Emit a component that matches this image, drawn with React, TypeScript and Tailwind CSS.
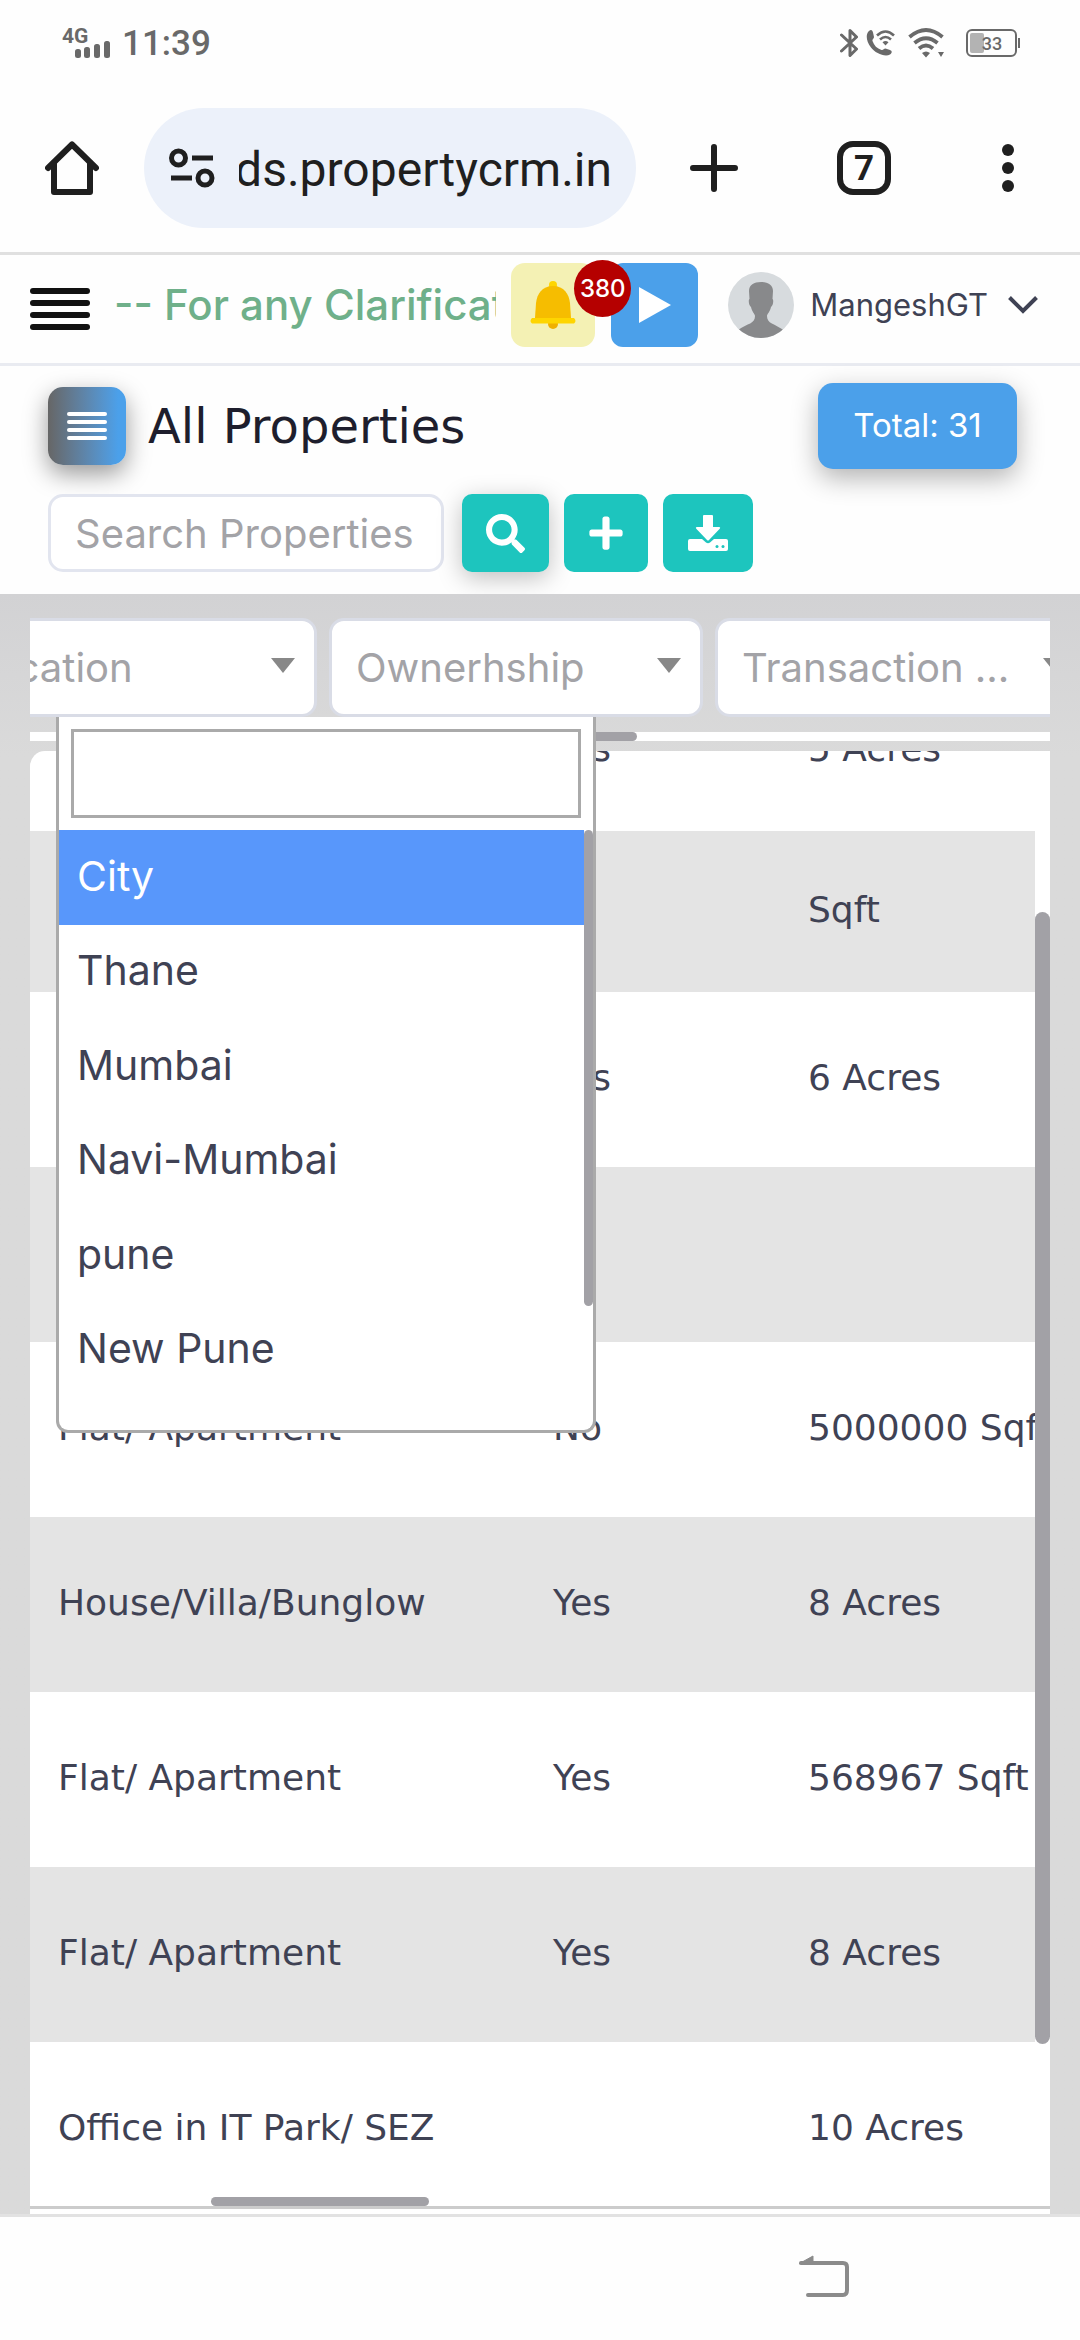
import { useState } from 'react'
import clsx from 'clsx'
import { FaPlus, FaSearch } from 'react-icons/fa'

interface Property {
  id: number; type: string; negotiable: string; area: string
}

const properties: Property[] = [
  { id: 1, type: '', negotiable: 'Yes', area: '5 Acres' },
  { id: 2, type: '', negotiable: '', area: 'Sqft' },
  { id: 3, type: '', negotiable: 'Yes', area: '6 Acres' },
  { id: 4, type: '', negotiable: '', area: '' },
  { id: 5, type: 'Flat/ Apartment', negotiable: 'No', area: '5000000 Sqft' },
  { id: 6, type: 'House/Villa/Bunglow', negotiable: 'Yes', area: '8 Acres' },
  { id: 7, type: 'Flat/ Apartment', negotiable: 'Yes', area: '568967 Sqft' },
  { id: 8, type: 'Flat/ Apartment', negotiable: 'Yes', area: '8 Acres' },
  { id: 9, type: 'Office in IT Park/ SEZ', negotiable: '', area: '10 Acres' },
]

const cities = ['City', 'Thane', 'Mumbai', 'Navi-Mumbai', 'pune', 'New Pune']

const filters = ['Location', 'Ownerhship', 'Transaction ...']

function StatusBar() {
  return (
    <div className="flex h-[84px] items-center justify-between pt-[2px] pr-[60px] pl-[62px] text-[#696969]">
      <div className="flex items-center gap-3">
        <svg className="overflow-visible" width="48" height="32" viewBox="0 0 48 32" fill="currentColor">
          <text x="0" y="16" fontSize="21" fontWeight="700" fontFamily="Roboto, sans-serif">4G</text>
          <rect x="13" y="22" width="6" height="9" rx="2.5" />
          <rect x="22" y="20" width="6" height="11" rx="2.5" />
          <rect x="32" y="17" width="6" height="14" rx="2.5" />
          <rect x="42" y="14" width="6" height="17" rx="2.5" />
        </svg>
        <span className="pt-[2px] text-[35px] leading-[40px] font-medium">11:39</span>
      </div>
      <div className="flex items-center">
        <svg width="18" height="30" viewBox="0 0 18 30" fill="none" stroke="currentColor" strokeWidth="3">
          <path d="M1.500 7 L16.500 21 L10 27.500 V2.500 L16.500 9 L1.500 23" strokeLinejoin="round" strokeLinecap="round" />
        </svg>
        <svg className="ml-2" width="30" height="28" viewBox="0 0 30 28">
          <path d="M3 2 C5 0 6.500 1 7 3.500 L8 8 C8 9.500 6 10 6.500 12 C8 16.500 11 19.500 15.500 21 C17.500 21.500 17.500 19.500 19.500 19.500 L24 21 C26.500 22 26 24 24 25.500 C19 28.500 9 24 5 18.500 C0 12 -.5 5 3 2Z" fill="currentColor" />
          <g fill="none" stroke="currentColor" strokeWidth="2.6">
            <path d="M11 6.500 Q19.500 -1.500 28 6.500" />
            <path d="M14 10.500 Q19.500 5.500 25 10.500" />
          </g>
          <path d="M16.500 13.200 Q19.500 11 22.500 13.200 L19.500 16.500Z" fill="currentColor" />
        </svg>
        <svg className="ml-3" width="38" height="30" viewBox="0 0 38 30">
          <g fill="none" stroke="currentColor" strokeWidth="3.8">
            <path d="M1.500 9 Q18 -5 34.500 9" />
            <path d="M6.500 15 Q18 5.500 29.500 15" />
            <path d="M11 20.500 Q18 14.500 25 20.500" />
          </g>
          <path d="M14 25 Q18 22 22 25 L18 29.500Z M30 24 h6 l-3 5z" fill="currentColor" />
        </svg>
        <svg className="ml-5" width="54" height="28" viewBox="0 0 54 28">
          <rect x="1" y="1" width="49" height="26" rx="5" fill="none" stroke="currentColor" strokeWidth="2" />
          <rect x="4" y="4" width="14" height="20" rx="2" fill="#b3b3b3" />
          <rect x="52" y="9" width="2" height="10" fill="currentColor" />
          <text x="26" y="21" textAnchor="middle" fontSize="18" fontWeight="500" fontFamily="Roboto, sans-serif" fill="currentColor">33</text>
        </svg>
      </div>
    </div>
  )
}

function BrowserBar() {
  return (
    <div className="flex h-[168px] items-center pr-[66px] pl-[45px] text-[#1f1f1f]">
      <button aria-label="Home">
        <svg width="54" height="54" viewBox="0 0 54 54" fill="none" stroke="currentColor" strokeWidth="6" strokeLinecap="round" strokeLinejoin="round">
          <path d="M3 27 L27 3.500 L51 27" />
          <path d="M9 22 V51 H45 V22" />
        </svg>
      </button>
      <div className="ml-[45px] flex h-[120px] flex-1 items-center gap-6 overflow-hidden rounded-full bg-[#ecf1fa] pr-[24px] pl-[25px]">
        <svg className="shrink-0" width="46" height="40" viewBox="0 0 46 40" fill="none" stroke="currentColor" strokeWidth="5">
          <circle cx="9.500" cy="10" r="7" />
          <path d="M23 10 H44 M2 30 H23" />
          <circle cx="36" cy="30" r="7" />
        </svg>
        <div className="flex min-w-0 flex-1 justify-end overflow-hidden pt-1">
          <span className="text-[48px] leading-[64px] whitespace-nowrap">ds.propertycrm.in</span>
        </div>
      </div>
      <button aria-label="New tab" className="ml-[54px]">
        <svg width="48" height="48" viewBox="0 0 48 48" stroke="currentColor" strokeWidth="6" strokeLinecap="round">
          <path d="M24 3 V45 M3 24 H45" />
        </svg>
      </button>
      <button aria-label="Open tabs" className="ml-[99px] flex size-[54px] items-center justify-center rounded-2xl border-6 border-[#1f1f1f] pt-[2px] text-[35px] leading-[40px] font-bold">
        7
      </button>
      <button aria-label="Menu" className="ml-[111px] flex flex-col gap-[6px]">
        <span className="size-3 rounded-full bg-current" />
        <span className="size-3 rounded-full bg-current" />
        <span className="size-3 rounded-full bg-current" />
      </button>
    </div>
  )
}

function BellIcon() {
  return (
    <svg width="48" height="50" viewBox="0 0 48 50">
      <circle cx="24" cy="5" r="4" fill="#fed500" />
      <circle cx="24" cy="44" r="5" fill="#f0b000" />
      <path d="M24 6 C13 6 8 14 7 23 L6 38 H42 L41 23 C40 14 35 6 24 6Z" fill="#f6bd00" />
      <path d="M3 38 H45 Q48 41 45 43.500 H3 Q0 41 3 38Z" fill="#fed500" />
    </svg>
  )
}

function Avatar() {
  return (
    <svg className="shrink-0 rounded-full" width="66" height="66" viewBox="0 0 66 66">
      <rect width="66" height="66" fill="#d7dbde" />
      <path d="M21 19 C21 13 26 10 33 10 C40 10 45 13 45 19 L44.500 27 C46 28 45 34 43 35 C42 40 39 42 39 44 C39 52 46 51 57 59 L50 66 H16 L10 58 C20 51 27 52 27 44 C27 42 24 40 23 35 C21 34 20 28 21.500 27Z" fill="#88898b" />
    </svg>
  )
}

function AppHeader() {
  return (
    <header className="flex items-center border-t-3 border-b-3 border-t-[#e0e0e0] border-b-[#e9ebf1] pt-2 pr-[42px] pb-4 pl-[30px] font-['Inter',sans-serif]">
      <button aria-label="Toggle sidebar" className="flex w-[60px] flex-col gap-[6px] pt-2">
        {[1, 2, 3, 4].map(n => (
          <span key={n} className="h-[6px] w-full rounded-full bg-[#111]" />
        ))}
      </button>
      <p className="ml-6 min-w-0 flex-1 overflow-hidden text-[42px] leading-[56px] font-medium whitespace-nowrap text-[#6fb08a]">
        -- For any Clarification
      </p>
      <button aria-label="Notifications" className="relative ml-[15px] flex size-[84px] items-center justify-center rounded-[14px] bg-[#f4f1b4]">
        <BellIcon />
        <span className="absolute -top-[3px] left-[63px] z-10 flex size-[57px] items-center justify-center rounded-full bg-[#b50000] text-2xl font-medium text-white">
          380
        </span>
      </button>
      <button aria-label="Play" className="ml-4 flex h-[84px] w-[87px] items-center justify-center rounded-xl bg-[#4ba0ea]">
        <svg width="34" height="38" viewBox="0 0 34 38" fill="#fff">
          <path d="M1 1 L33 19 L1 37Z" />
        </svg>
      </button>
      <button className="ml-[30px] flex items-center text-[#3f4254]">
        <Avatar />
        <span className="ml-4 text-[31px]">MangeshGT</span>
        <svg className="ml-5" width="30" height="18" viewBox="0 0 30 18" fill="none" stroke="currentColor" strokeWidth="4">
          <path d="M1.500 1.500 L15 15 L28.500 1.500" />
        </svg>
      </button>
    </header>
  )
}

function PageHead({ total }: { total: number }) {
  return (
    <section className="flex flex-col gap-[25px] px-12 pt-[17px] pb-[22px] font-['Inter',sans-serif]">
      <div className="flex items-center pr-[15px]">
        <button aria-label="List menu" className="flex size-[78px] flex-col items-center justify-center gap-1 rounded-[15px] bg-linear-to-r from-[#666] to-[#4ba0ea] to-90% shadow-[0_9px_24px_rgba(0,0,0,0.4)]">
          {[1, 2, 3, 4].map(n => (
            <span key={n} className="h-1 w-10 rounded-xs bg-white" />
          ))}
        </button>
        <h1 className="ml-[22px] flex-1 font-['DejaVu_Sans',sans-serif] text-5xl text-[#1e1e2d]">All Properties</h1>
        <button className="h-[86px] w-[199px] rounded-[15px] bg-[#4ba0ea] text-[33px] text-white shadow-[0_9px_27px_rgba(0,0,0,0.3)]">
          Total: {total}
        </button>
      </div>
      <div className="flex items-center">
        <input
          type="text"
          aria-label="Search Properties"
          placeholder="Search Properties"
          className="h-[78px] w-[396px] rounded-[15px] border-3 border-[#e2e5ef] bg-white pr-4 pl-6 text-[40px] text-[#3f4254] placeholder:text-[#a3a3a7]"
        />
        <button aria-label="Search" className="ml-[18px] flex h-[78px] w-[87px] items-center justify-center rounded-[10px] bg-[#1dc5be] text-white shadow-[0_6px_24px_rgba(0,0,0,0.25)]">
          <FaSearch size={39} />
        </button>
        <button aria-label="Add property" className="ml-[15px] flex h-[78px] w-[84px] items-center justify-center rounded-[10px] bg-[#1dc5be] text-white">
          <FaPlus size={38} />
        </button>
        <button aria-label="Download" className="ml-[15px] flex h-[78px] w-[90px] items-center justify-center rounded-[10px] bg-[#1dc5be]">
          <svg width="40" height="40" viewBox="0 0 40 40" fill="#fff">
            <path d="M16 2 h8 q1 0 1 1 v11 h6 q2 0 .5 2 L21 27 q-1 1 -2 0 L8.500 16 q-1.500 -2 .5 -2 h6 V3 q0 -1 1 -1Z" />
            <path d="M2 26 h12 l4 3.500 q2 1.500 4 0 l4 -3.500 h12 q2 0 2 2 v8 q0 2 -2 2 h-36 q-2 0 -2 -2 v-8 q0 -2 2 -2Z" />
            <circle cx="29" cy="33.500" r="1.500" fill="#1dc5be" />
            <circle cx="35" cy="33.500" r="1.500" fill="#1dc5be" />
          </svg>
        </button>
      </div>
    </section>
  )
}

function FilterSelect({ label }: { label: string }) {
  return (
    <div className="grid w-[374px] shrink-0 items-center">
      <select
        aria-label={label}
        className="col-start-1 row-start-1 h-[99px] w-full appearance-none rounded-[15px] border-3 border-[#d9dce6] bg-white pr-12 pl-6 text-[40px] text-[#a3a3a7]"
      >
        <option>{label}</option>
      </select>
      <svg className="pointer-events-none col-start-1 row-start-1 mr-[22px] mb-1 justify-self-end" width="24" height="15" viewBox="0 0 24 15" fill="#888">
        <path d="M0 0 H24 L12 15Z" />
      </svg>
    </div>
  )
}

function CityDropdown() {
  const [selected, setSelected] = useState('City')

  return (
    <div className="absolute top-[123px] left-[56px] z-20 h-[716px] w-[540px] overflow-hidden rounded-b-xl border-3 border-t-0 border-[#aaa] bg-white text-[41px] text-[#3f4254]">
      <div className="p-3">
        <input type="search" aria-label="Search city" className="block h-[89px] w-full border-3 border-[#aaa] px-3" />
      </div>
      <div className="flex items-start">
        <ul role="listbox" aria-label="City" className="grid h-[567px] flex-1 auto-rows-fr">
          {cities.map(c => (
            <li
              key={c}
              role="option"
              aria-selected={c === selected}
              onClick={() => setSelected(c)}
              className={clsx('flex items-center pb-[2px] pl-[18px]', c === selected && 'bg-[#5897fb] text-white')}
            >
              {c}
            </li>
          ))}
        </ul>
        <div className="h-[476px] w-[9px] rounded-full bg-[#a2a1a6]" />
      </div>
    </div>
  )
}

function PropertyTable() {
  return (
    <div className="overflow-hidden rounded-tl-[15px] border-b-3 border-[#ccc] bg-white">
      <div className="flex h-[1446px] overflow-hidden">
        <div className="min-w-0 flex-1 overflow-hidden">
          {/* scrolled down, the first row is half under the top edge */}
          <table className="-mt-[81px] w-full table-fixed text-left font-['DejaVu_Sans',sans-serif] text-[36px] whitespace-nowrap text-[#3f4254]">
            <tbody>
              {properties.map(p => (
                <tr key={p.id} className={clsx(p.id <= 2 ? 'h-[161px]' : 'h-[175px]', p.id % 2 === 0 && 'bg-[#e4e4e4]')}>
                  <td className="w-[495px] pb-1 pl-7">{p.type}</td>
                  <td className="w-[255px] pb-1 pl-7">{p.negotiable}</td>
                  <td className="pb-1 pl-7">{p.area}</td>
                </tr>
              ))}
            </tbody>
          </table>
        </div>
        <div className="w-[15px] pt-[161px]">
          <div className="h-[1132px] rounded-full bg-[#a2a1a6]" />
        </div>
      </div>
      <div className="h-[9px] pl-[181px]">
        <div className="h-full w-[218px] rounded-full bg-[#a2a1a6]" />
      </div>
    </div>
  )
}

export default function App() {
  return (
    <div className="min-h-screen bg-[#fefefe] font-['Roboto',sans-serif]">
      <StatusBar />
      <BrowserBar />
      <AppHeader />
      <PageHead total={31} />

      <main className="relative bg-[#dadada] bg-linear-to-b from-[#d2d2d4] to-[#dadada] to-10% px-[30px] pt-6 font-['Inter',sans-serif]">
        <div className="flex overflow-hidden">
          <div className="-ml-[87px] flex gap-3">
            {filters.map(f => (
              <FilterSelect key={f} label={f} />
            ))}
          </div>
        </div>
        <div className="mt-[15px] mb-[10px] h-[9px] bg-white pl-[389px]">
          <div className="h-full w-[218px] rounded-full bg-[#a2a1a6]" />
        </div>
        <PropertyTable />
        <div className="h-[5px] bg-white" />
        <CityDropdown />
      </main>

      <nav className="flex h-[126px] justify-end border-t-3 border-[#e2e2e2] pt-[38px] pr-[231px]">
        <button aria-label="Back" className="self-start">
          <svg width="51" height="42" viewBox="0 0 51 42" fill="none" stroke="#8b8b8b" strokeWidth="4" strokeLinecap="round">
            <path d="M3 8 H45 Q49 8 49 12 V35 Q49 40 45 40 H10" />
            <path d="M1.500 8.500 L15 1 V8.500Z" fill="#8b8b8b" strokeWidth="1" />
          </svg>
        </button>
      </nav>
    </div>
  )
}
